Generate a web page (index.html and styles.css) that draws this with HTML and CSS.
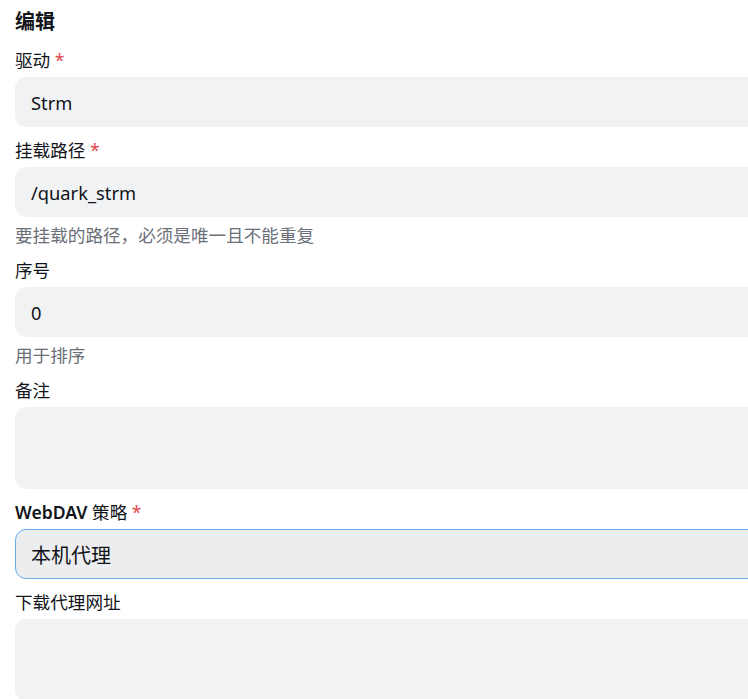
FILE: index.html
```html
<!DOCTYPE html>
<html lang="zh-CN">
<head>
<meta charset="utf-8">
<title>编辑</title>
<link rel="stylesheet" href="styles.css">
</head>
<body>
<main class="page">
  <h2 class="title">编辑</h2>
  <form class="form">
    <div class="field">
      <label class="label">驱动 <span class="req">*</span></label>
      <div class="input">Strm</div>
    </div>
    <div class="field">
      <label class="label">挂载路径 <span class="req">*</span></label>
      <div class="input">/quark_strm</div>
      <p class="help">要挂载的路径，必须是唯一且不能重复</p>
    </div>
    <div class="field">
      <label class="label">序号</label>
      <div class="input">0</div>
      <p class="help">用于排序</p>
    </div>
    <div class="field">
      <label class="label">备注</label>
      <div class="textarea"></div>
    </div>
    <div class="field">
      <label class="label"><span class="latin-strong">WebDAV</span> 策略 <span class="req">*</span></label>
      <div class="select">本机代理</div>
    </div>
    <div class="field">
      <label class="label">下载代理网址</label>
      <div class="textarea"></div>
    </div>
  </form>
</main>
</body>
</html>
```
FILE: styles.css
```css
html, body {
  margin: 0;
  padding: 0;
  overflow: hidden;
  background: #ffffff;
}
body {
  font-family: "Noto Sans", "Noto Sans CJK SC", sans-serif;
  color: #111418;
  font-size: 17.6px;
}
.page {
  padding: 8px 0 0 15px;
  width: 760px;
}
.title {
  margin: 0 0 12px 0;
  font-size: 20px;
  line-height: 28px;
  font-weight: 700;
}
.form {
  display: flex;
  flex-direction: column;
  gap: 11px;
}
.field {
  display: flex;
  flex-direction: column;
}
.label {
  display: block;
  line-height: 24px;
  margin-bottom: 5px;
}
.latin-strong {
  font-weight: 600;
}
.req {
  color: #e5484d;
}
.input {
  height: 50px;
  box-sizing: border-box;
  background: #f1f2f4;
  border-radius: 11px;
  padding: 0 16px;
  display: flex;
  align-items: center;
  font-size: 18.3px;
}
.textarea {
  height: 82px;
  background: #f1f2f4;
  border-radius: 11px;
}
.select {
  height: 50px;
  box-sizing: border-box;
  background: #ecedef;
  border: 1px solid #68acea;
  border-radius: 11px;
  padding: 0 15px;
  display: flex;
  align-items: center;
  font-size: 20px;
}
.help {
  margin: 6px 0 0 0;
  line-height: 24px;
  color: #6b7078;
}
```
